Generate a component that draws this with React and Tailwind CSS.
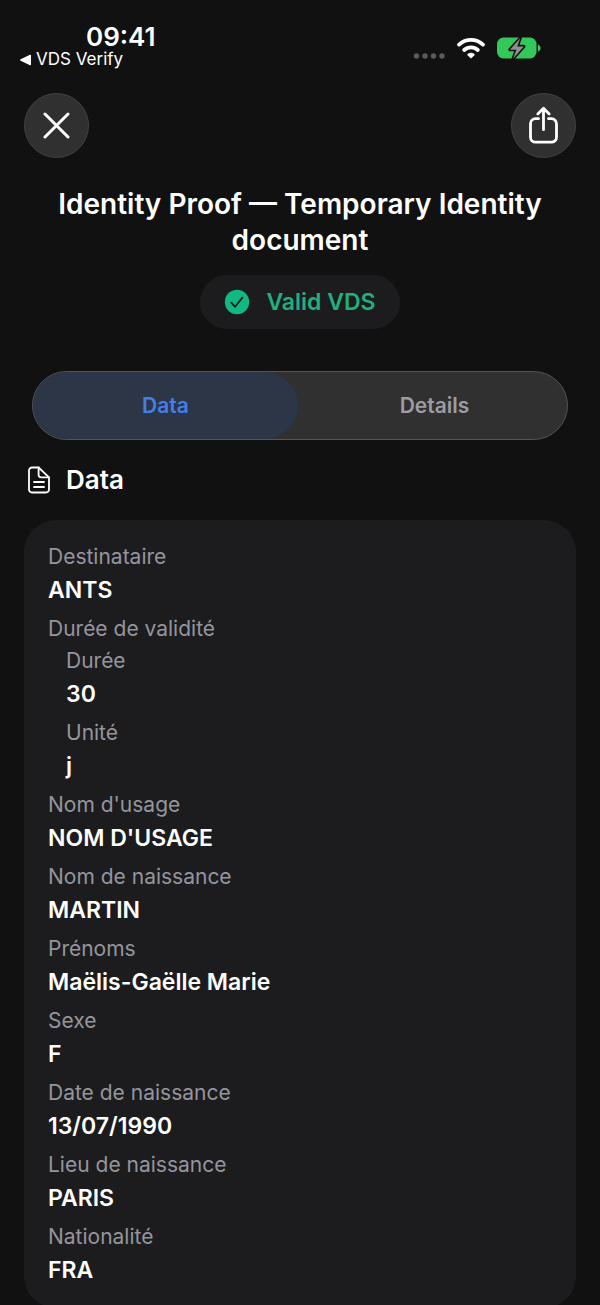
import React, { useState } from "react";

const fields = [
  { label: "Destinataire", value: "ANTS" },
  {
    label: "Durée de validité",
    children: [
      { label: "Durée", value: "30" },
      { label: "Unité", value: "j" },
    ],
  },
  { label: "Nom d'usage", value: "NOM D'USAGE" },
  { label: "Nom de naissance", value: "MARTIN" },
  { label: "Prénoms", value: "Maëlis-Gaëlle Marie" },
  { label: "Sexe", value: "F" },
  { label: "Date de naissance", value: "13/07/1990" },
  { label: "Lieu de naissance", value: "PARIS" },
  { label: "Nationalité", value: "FRA" },
];

const tabs = ["Data", "Details"];

const StatusBar = () => (
  <div className="flex items-start justify-between pt-6 pl-5 pr-[59px]">
    <div className="flex flex-col">
      <span className="pl-[66px] text-[26px] leading-[26px] font-semibold">09:41</span>
      <a href="#" className="flex items-center gap-1 text-[17px] leading-[19px]">
        <svg viewBox="0 0 12 12" className="size-3" fill="currentColor">
          <path d="M.6 5.3 10 .8c.6-.3 1 0 1 .6v9.2c0 .6-.4.9-1 .6L.6 6.7c-.7-.4-.7-1 0-1.4Z" />
        </svg>
        VDS Verify
      </a>
    </div>
    <div className="flex items-center gap-[11px] pt-3">
      <svg viewBox="0 0 32 6" className="mt-4 h-[6px] w-8" fill="#5a5a5c">
        <circle cx="3.5" cy="3" r="2.7" />
        <circle cx="12" cy="3" r="2.7" />
        <circle cx="20.5" cy="3" r="2.7" />
        <circle cx="29" cy="3" r="2.7" />
      </svg>
      <svg viewBox="0 0 30 22" className="h-[22px] w-[30px]" fill="none" stroke="white">
        <path d="M3 7.600a17.400 17.400 0 0 1 24 0" strokeWidth="3.800" strokeLinecap="round" />
        <path d="M8.200 13a10 10 0 0 1 13.600 0" strokeWidth="3.800" strokeLinecap="round" />
        <path d="M15 21.600l-3.300-3.200c-.5-.5-.4-1.200.2-1.600a5.500 5.500 0 0 1 6.200 0c.6.4.7 1.100.2 1.600Z" fill="white" stroke="none" />
      </svg>
      <svg viewBox="0 0 44 24" className="h-6 w-11">
        <rect x="0" y="1.5" width="39.5" height="21" rx="6.5" fill="#34c759" />
        <path d="M41 8.5c1.600.5 2.600 2 2.600 3.500s-1 3-2.600 3.500Z" fill="#34c759" />
        <path
          d="M22.8 1.500 12.300 13.100c-.5.600-.2 1.400.6 1.400h5.400l-3 8c-.4 1 .6 1.500 1.300.7l10.800-12.200c.5-.6.2-1.400-.6-1.400h-5.400l2.700-7.500c.3-1-.6-1.400-1.300-.6Z"
          fill="#8e8e93"
          stroke="#111111"
          strokeWidth="1.6"
        />
      </svg>
    </div>
  </div>
);

const roundButton =
  "flex size-[65px] items-center justify-center rounded-full border border-[#424242] bg-[#303030]";

const Field = ({ label, value, children }) => (
  <div className="flex flex-col gap-1.5">
    <dt className="text-[21px] leading-[26px] text-[#95959d]">{label}</dt>
    {children ? (
      <dd>
        <dl className="flex flex-col gap-3 pl-[18px]">
          {children.map((child) => (
            <Field key={child.label} label={child.label} value={child.value} />
          ))}
        </dl>
      </dd>
    ) : (
      <dd className="text-[23px] leading-7 font-semibold">{value}</dd>
    )}
  </div>
);

const App = () => {
  const [activeTab, setActiveTab] = useState("Data");

  return (
    <div className="h-screen overflow-y-auto bg-[#111111] font-['Inter',sans-serif] text-white [scrollbar-width:none]">
      <StatusBar />

      <header className="flex justify-between px-6 pt-6">
        <button type="button" aria-label="Close" className={roundButton}>
          <svg viewBox="0 0 27 27" className="size-[27px]" fill="none" stroke="white" strokeWidth="3" strokeLinecap="round">
            <path d="M2 2 25 25M25 2 2 25" />
          </svg>
        </button>
        <button type="button" aria-label="Share" className={roundButton}>
          <svg viewBox="0 0 31 39" className="h-[39px] w-[31px]" fill="none" stroke="white" strokeWidth="2.8" strokeLinecap="round" strokeLinejoin="round">
            <path d="M10.500 12.700H7.500a5 5 0 0 0-5 5v13.500a5 5 0 0 0 5 5h16a5 5 0 0 0 5-5V17.700a5 5 0 0 0-5-5h-3" />
            <path d="M15.500 23.700V2.700M9.800 8 15.500 2.300l5.700 5.700" />
          </svg>
        </button>
      </header>

      <main className="px-6">
        <h1 className="pt-7 text-center text-[28px] leading-9 font-semibold">
          Identity Proof — Temporary Identity document
        </h1>

        <div className="mt-[17px] flex justify-center">
          <div className="flex h-[54px] items-center gap-4 rounded-full bg-[#1c1c1e] px-6 text-[23px] font-semibold text-[#21b07d]">
            <svg viewBox="0 0 26 26" className="size-[26px]">
              <circle cx="13" cy="13" r="12.2" fill="#10b981" />
              <path d="m7.300 13.600 3.800 4.200 7.300-9.200" fill="none" stroke="#1c1c1e" strokeWidth="1.8" strokeLinecap="round" strokeLinejoin="round" />
            </svg>
            Valid VDS
          </div>
        </div>

        <div role="tablist" className="mx-2 mt-[42px] grid h-[69px] grid-cols-2 gap-1 rounded-full border border-[#555555] bg-[#303030]">
          {tabs.map((tab) => (
            <button
              key={tab}
              type="button"
              role="tab"
              aria-selected={activeTab === tab}
              onClick={() => setActiveTab(tab)}
              className={`rounded-full text-[21px] font-semibold ${
                activeTab === tab ? "bg-[#2c3646] text-[#437fea]" : "text-[#9c9ca3]"
              }`}
            >
              {tab}
            </button>
          ))}
        </div>

        <h2 className="mt-6 flex items-center gap-3.5 text-[26px] leading-8 font-semibold">
          <svg viewBox="0 0 28 28" className="size-7" fill="none" stroke="white" strokeWidth="1.8" strokeLinecap="round" strokeLinejoin="round">
            <path d="M14.600 1.500H8a3 3 0 0 0-3 3v19a3 3 0 0 0 3 3h14a3 3 0 0 0 3-3V11.300Z" />
            <path d="M14.600 1.500v7.300a2.500 2.500 0 0 0 2.500 2.500H25M10 16h10M10 21h10" />
          </svg>
          Data
        </h2>

        <dl className="mt-6 flex flex-col gap-3 rounded-[32px] bg-[#1c1c1e] p-6">
          {fields.map((field) => (
            <Field key={field.label} label={field.label} value={field.value}>
              {field.children}
            </Field>
          ))}
        </dl>
      </main>
    </div>
  );
};

export default App;
